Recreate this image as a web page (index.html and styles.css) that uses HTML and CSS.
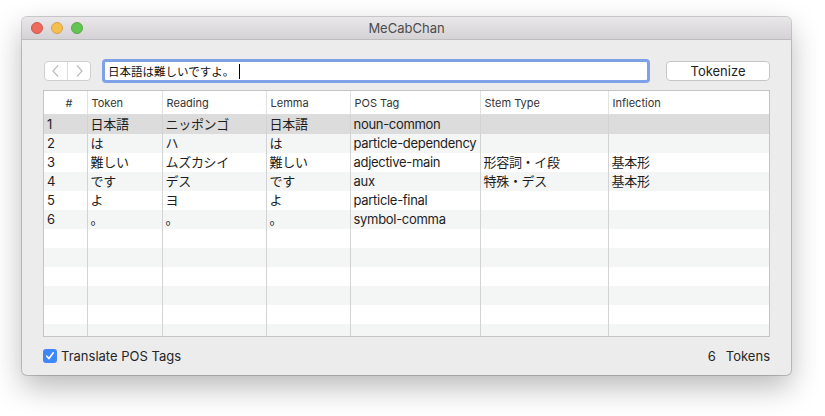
FILE: index.html
```html
<!DOCTYPE html>
<html lang="ja">
<head>
<meta charset="utf-8">
<title>MeCabChan</title>
<link rel="stylesheet" href="styles.css">
</head>
<body>
<div class="window">
  <div class="titlebar">
    <div class="lights">
      <span class="light red"></span>
      <span class="light yellow"></span>
      <span class="light green"></span>
    </div>
    <div class="title">MeCabChan</div>
  </div>
  <div class="content">
    <div class="toolbar">
      <div class="nav">
        <span class="nav-btn"><svg width="10" height="14" viewBox="0 0 10 14"><path d="M7 1.5 L2 7 L7 12.5" fill="none" stroke="#bdbdbd" stroke-width="1.2"/></svg></span>
        <span class="nav-btn"><svg width="10" height="14" viewBox="0 0 10 14"><path d="M3 1.5 L8 7 L3 12.5" fill="none" stroke="#bdbdbd" stroke-width="1.2"/></svg></span>
      </div>
      <div class="field"><span class="field-text">日本語は難しいですよ。</span><span class="caret"></span></div>
      <button class="btn">Tokenize</button>
    </div>
    <div class="table-wrap">
      <table class="grid">
        <colgroup>
          <col class="c-num"><col class="c-token"><col class="c-reading"><col class="c-lemma"><col class="c-pos"><col class="c-stem"><col class="c-infl">
        </colgroup>
        <thead>
          <tr><th class="num">#</th><th>Token</th><th>Reading</th><th>Lemma</th><th>POS Tag</th><th>Stem Type</th><th>Inflection</th></tr>
        </thead>
        <tbody>
          <tr class="sel"><td>1</td><td>日本語</td><td>ニッポンゴ</td><td>日本語</td><td>noun-common</td><td></td><td></td></tr>
          <tr class="alt"><td>2</td><td>は</td><td>ハ</td><td>は</td><td>particle-dependency</td><td></td><td></td></tr>
          <tr><td>3</td><td>難しい</td><td>ムズカシイ</td><td>難しい</td><td>adjective-main</td><td>形容詞・イ段</td><td>基本形</td></tr>
          <tr class="alt"><td>4</td><td>です</td><td>デス</td><td>です</td><td>aux</td><td>特殊・デス</td><td>基本形</td></tr>
          <tr><td>5</td><td>よ</td><td>ヨ</td><td>よ</td><td>particle-final</td><td></td><td></td></tr>
          <tr class="alt"><td>6</td><td>。</td><td>。</td><td>。</td><td>symbol-comma</td><td></td><td></td></tr>
          <tr><td></td><td></td><td></td><td></td><td></td><td></td><td></td></tr>
          <tr class="alt"><td></td><td></td><td></td><td></td><td></td><td></td><td></td></tr>
          <tr><td></td><td></td><td></td><td></td><td></td><td></td><td></td></tr>
          <tr class="alt"><td></td><td></td><td></td><td></td><td></td><td></td><td></td></tr>
          <tr><td></td><td></td><td></td><td></td><td></td><td></td><td></td></tr>
          <tr class="alt"><td></td><td></td><td></td><td></td><td></td><td></td><td></td></tr>
        </tbody>
      </table>
    </div>
    <div class="footer">
      <label class="check">
        <span class="box"><svg width="10" height="10" viewBox="0 0 10 10"><path d="M1.8 5.2 L4 7.6 L8.3 1.8" fill="none" stroke="#fff" stroke-width="1.6" stroke-linecap="round" stroke-linejoin="round"/></svg></span>
        <span>Translate POS Tags</span>
      </label>
      <div class="count"><span>6</span><span>Tokens</span></div>
    </div>
  </div>
</div>
</body>
</html>
```

FILE: styles.css
```css
html, body {
  margin: 0;
  padding: 0;
  background: #ffffff;
}
body {
  font-family: "Inter", "Liberation Sans", "Noto Sans CJK JP", sans-serif;
  font-size: 13px;
  color: #222;
  padding: 17px 0 0 22px;
  width: 825px;
  height: 416px;
  box-sizing: border-box;
  overflow: hidden;
}
.window {
  width: 769px;
  height: 358px;
  background: #ececec;
  border-radius: 5px;
  box-shadow: 0 0 0 1px rgba(0,0,0,0.18), 0 12px 30px rgba(0,0,0,0.28);
  display: flex;
  flex-direction: column;
  overflow: hidden;
}
.titlebar {
  height: 22px;
  flex: none;
  background: linear-gradient(#e9e7e9, #d4d2d4);
  border-bottom: 1px solid #bdbdbd;
  display: flex;
  align-items: center;
  position: relative;
}
.lights {
  display: flex;
  gap: 8px;
  padding-left: 9px;
}
.light {
  width: 12px;
  height: 12px;
  border-radius: 50%;
  box-sizing: border-box;
}
.red { background: #ed6a5e; border: 0.5px solid #ce5347; }
.yellow { background: #f5bf4f; border: 0.5px solid #d6a243; }
.green { background: #61c554; border: 0.5px solid #58a942; }
.title {
  position: absolute;
  left: 0;
  right: 0;
  text-align: center;
  font-size: 13px;
  color: #4c4c4c;
  pointer-events: none;
}
.content {
  flex: 1;
  padding: 20px 21px 0 21px;
  display: flex;
  flex-direction: column;
}
.toolbar {
  display: flex;
  align-items: center;
  height: 22px;
}
.nav {
  display: flex;
  width: 47px;
  height: 20px;
  margin-left: 1px;
  background: #fff;
  border: 1px solid #cfcfcf;
  border-radius: 4px;
  box-sizing: border-box;
}
.nav-btn {
  flex: 1;
  display: flex;
  align-items: center;
  justify-content: center;
}
.nav-btn + .nav-btn {
  border-left: 1px solid #dcdcdc;
}
.field {
  margin-left: 11px;
  width: 548px;
  height: 24px;
  box-sizing: border-box;
  background: #fff;
  border: 3px solid #7fa1e8;
  border-radius: 4px;
  display: flex;
  align-items: center;
  padding-left: 3px;
}
.field-text {
  font-family: "Noto Sans CJK JP", sans-serif;
  font-size: 11.5px;
  color: #111;
}
.caret {
  display: inline-block;
  width: 1px;
  height: 15px;
  background: #000;
  margin-left: 5px;
}
.btn {
  margin-left: 16px;
  width: 104px;
  height: 20px;
  background: #fff;
  border: 1px solid #c6c6c6;
  border-radius: 4px;
  font-family: inherit;
  font-size: 13px;
  color: #222;
  padding: 0;
}
.table-wrap {
  margin-top: 8px;
  height: 247px;
  border: 1px solid #c4c4c4;
  background: #fff;
  overflow: hidden;
  box-sizing: border-box;
}
.grid {
  width: 100%;
  border-collapse: collapse;
  table-layout: fixed;
}
.c-num { width: 43px; }
.c-token { width: 75px; }
.c-reading { width: 104px; }
.c-lemma { width: 84px; }
.c-pos { width: 130px; }
.c-stem { width: 128px; }
.c-infl { width: auto; }
.grid th {
  height: 23px;
  font-weight: normal;
  font-size: 11px;
  color: #333;
  text-align: left;
  padding: 0 0 0 4px;
  border-bottom: 1px solid #dedede;
  border-left: 1px solid #e2e2e2;
  background: #fff;
  white-space: nowrap;
}
.grid th:first-child { border-left: none; }
.grid th.num {
  text-align: right;
  padding: 0 14px 0 0;
}
.grid td {
  height: 19px;
  padding: 0 0 0 3px;
  border-left: 1px solid #d3d3d3;
  white-space: nowrap;
  overflow: hidden;
  font-size: 13px;
  letter-spacing: -0.3px;
  color: #1e1e1e;
  line-height: 19px;
}
.grid td:first-child { border-left: none; }
.grid tbody tr { background: #fff; }
.grid tbody tr.alt { background: #f4f5f5; }
.grid tbody tr.sel { background: #dcdcdc; }
.footer {
  flex: 1;
  display: flex;
  align-items: center;
  justify-content: space-between;
  padding-bottom: 1px;
}
.check {
  display: flex;
  align-items: center;
  gap: 4px;
  color: #262626;
}
.box {
  width: 14px;
  height: 14px;
  border-radius: 3px;
  background: #3f86f6;
  display: flex;
  align-items: center;
  justify-content: center;
}
.count {
  display: flex;
  gap: 10px;
  color: #262626;
}
```
